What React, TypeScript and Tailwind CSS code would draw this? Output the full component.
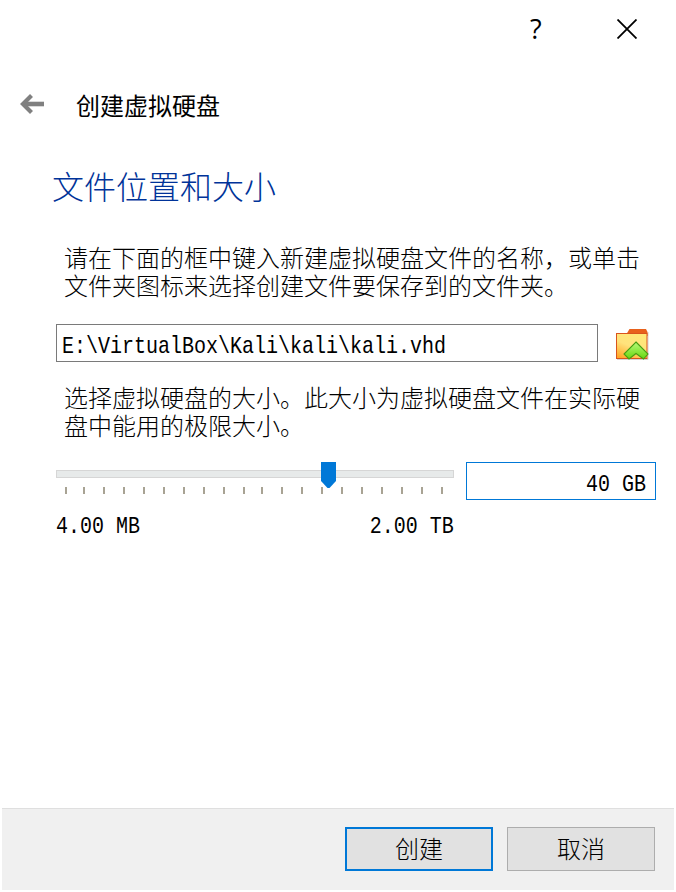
import React from 'react';

const cjk = "font-['Noto_Sans_CJK_SC',sans-serif] font-light";
const mono = "inline-block whitespace-pre font-['Liberation_Mono',monospace] text-[24px] leading-[28px] scale-x-[0.833]";

const tickGaps = [
  'ml-[9px]', 'ml-[16px]', 'ml-[18px]', 'ml-[18px]', 'ml-[18px]', 'ml-[18px]', 'ml-[18px]',
  'ml-[18px]', 'ml-[18px]', 'ml-[18px]', 'ml-[16px]', 'ml-[18px]', 'ml-[18px]', 'ml-[18px]',
  'ml-[18px]', 'ml-[18px]', 'ml-[18px]', 'ml-[18px]', 'ml-[18px]', 'ml-[18px]',
];

function FolderIcon() {
  return (
    <svg width="34" height="34" viewBox="0 0 34 34">
      <defs>
        <linearGradient id="folder" x1="0.7" y1="0" x2="0.2" y2="1">
          <stop offset="0" stopColor="#ffe878" />
          <stop offset="0.5" stopColor="#ffe27c" />
          <stop offset="1" stopColor="#ffa829" />
        </linearGradient>
        <linearGradient id="chevron" x1="0" y1="0" x2="0" y2="1">
          <stop offset="0" stopColor="#b8fb7a" />
          <stop offset="1" stopColor="#67d60d" />
        </linearGradient>
      </defs>
      <path d="M2 32.5H33V5" fill="none" stroke="#d4d4d4" />
      <path d="M11.5 7L14.5 2H31L32.5 5V9H11.5Z" fill="#e8611c" />
      <rect x="1.5" y="6.5" width="30.5" height="25" fill="url(#folder)" stroke="#d9541c" />
      <path d="M21 15L33 27L28.5 32L21 26.5L14 32L9 27Z" fill="url(#chevron)" stroke="#479c12" strokeWidth="1.1" />
    </svg>
  );
}

export default function App() {
  return (
    <div className={`flex h-[892px] w-[676px] flex-col overflow-hidden bg-white text-black ${cjk}`}>
      <div className="flex h-[60px] shrink-0 justify-end pt-[19px] pr-[39px]">
        <span className="mr-[76px] w-[11px] font-['Open_Sans',sans-serif] text-[27px] leading-[20px] font-normal">?</span>
        <svg width="20" height="20" viewBox="0 0 20 20" stroke="#000" strokeWidth="1.8">
          <path d="M0.5 0.5L19.5 19.5M19.5 0.5L0.5 19.5" />
        </svg>
      </div>

      <div className="flex h-[92px] shrink-0 items-center pl-[20px]">
        <svg className="mb-[5px]" width="25" height="20" viewBox="0 0 25 20" fill="none" stroke="#808080">
          <path d="M11.5 1.5L3 10L11.5 18.5" strokeWidth="4.2" />
          <path d="M3 10H24" strokeWidth="4.6" />
        </svg>
        <h1 className="mb-[3px] ml-[31px] text-[24px] leading-[28px] font-normal">创建虚拟硬盘</h1>
      </div>

      <main className="flex grow flex-col pr-[20px] pl-[56px]">
        <h2 className="mt-[13px] -ml-[4px] text-[32px] leading-[40px] text-[#003399]">文件位置和大小</h2>
        <p className="mt-[38px] ml-[8px] text-[24px] leading-[28px] whitespace-nowrap">
          请在下面的框中键入新建虚拟硬盘文件的名称，或单击<br />文件夹图标来选择创建文件要保存到的文件夹。
        </p>
        <div className="mt-[25px] flex h-[38px]">
          <div className="flex w-[542px] items-center border border-[#7a7a7a] pt-[7px] pl-[5px]">
            <span className={`${mono} origin-left`}>E:\VirtualBox\Kali\kali\kali.vhd</span>
          </div>
          <div className="mt-[3px] ml-[17px]"><FolderIcon /></div>
        </div>
        <p className="mt-[21px] ml-[8px] text-[24px] leading-[28px] whitespace-nowrap">
          选择虚拟硬盘的大小。此大小为虚拟硬盘文件在实际硬<br />盘中能用的极限大小。
        </p>
        <div className="mt-[23px] flex items-start">
          <div className="w-[398px]">
            <div className="relative pt-[8px]">
              <div className="h-[8px] border border-[#d6d6d6] bg-[#e7eaea]" />
              <div className="mt-[9px] flex">
                {tickGaps.map((gap, i) => (
                  <span key={i} className={`h-[7px] w-[2px] shrink-0 bg-[#a8a394] ${gap}`} />
                ))}
              </div>
              <svg className="absolute top-0 left-[265px]" width="15" height="26" viewBox="0 0 15 26">
                <path d="M0 0H15V19L8.5 26H6.5L0 19Z" fill="#0078d7" />
              </svg>
            </div>
            <div className="mt-[19px] flex justify-between">
              <span className={`${mono} origin-left`}>4.00 MB</span>
              <span className={`${mono} origin-right`}>2.00 TB</span>
            </div>
          </div>
          <div className="ml-[12px] flex h-[38px] w-[190px] items-center justify-end border border-[#0078d7] pt-[7px] pr-[9px]">
            <span className={`${mono} origin-right`}>40 GB</span>
          </div>
        </div>
      </main>

      <footer className="mx-[2px] mb-[2px] flex h-[82px] shrink-0 justify-end gap-[14px] border-t border-[#dfdfdf] bg-[#f0f0f0] pt-[18px] pr-[19px]">
        <button className="h-[44px] w-[148px] border-2 border-[#0078d7] bg-[#e1e1e1] pb-[2px] text-[24px] leading-[28px]">创建</button>
        <button className="h-[44px] w-[148px] border border-[#adadad] bg-[#e1e1e1] pb-[2px] text-[24px] leading-[28px]">取消</button>
      </footer>
    </div>
  );
}
